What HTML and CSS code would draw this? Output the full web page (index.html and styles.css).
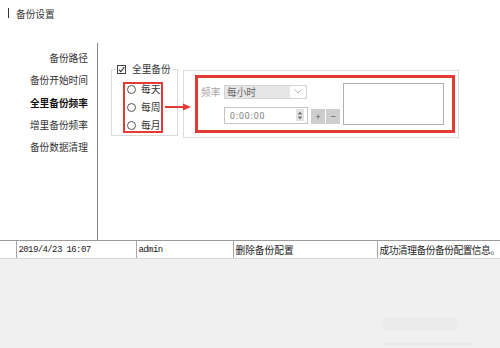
FILE: index.html
```html
<!DOCTYPE html>
<html lang="zh-CN">
<head>
  <meta charset="UTF-8">
  <title>备份设置</title>
  <link rel="stylesheet" href="styles.css">
</head>
<body>
  <div class="page-title"><span class="bar"></span>备份设置</div>

  <div class="settings">
    <ul class="nav">
      <li>备份路径</li>
      <li>备份开始时间</li>
      <li class="active">全里备份频率</li>
      <li>增里备份频率</li>
      <li>备份数据清理</li>
    </ul>

    <div class="panel">
      <fieldset class="group-full">
        <legend>
          <span class="legend-label">
            <span class="check">
              <svg width="7" height="7" viewBox="0 0 7 7"><path d="M0.8 3.6 L2.8 5.6 L6.4 1.2" fill="none" stroke="#333" stroke-width="1.1"/></svg>
            </span>
            全里备份
          </span>
        </legend>
        <div class="radio-list">
          <div class="radio"><span class="dot"></span>每天</div>
          <div class="radio"><span class="dot"></span>每周</div>
          <div class="radio"><span class="dot"></span>每月</div>
        </div>
      </fieldset>

      <svg class="arrow" width="28" height="8" viewBox="0 0 28 8">
        <line x1="0" y1="4" x2="20" y2="4" stroke="#e53935" stroke-width="2"/>
        <polygon points="18,0.5 26,4 18,7.5" fill="#e53935"/>
      </svg>

      <div class="group-freq">
        <div class="freq-box">
          <div class="freq-fields">
            <div class="row">
              <span class="label">频率</span>
              <div class="select">
                <span class="value">每小时</span>
                <span class="caret">
                  <svg width="8" height="5" viewBox="0 0 8 5"><path d="M0.5 0.5 L4 4 L7.5 0.5" fill="none" stroke="#b5b5b5" stroke-width="1"/></svg>
                </span>
              </div>
            </div>
            <div class="row row-time">
              <div class="time">
                <span>0:00:00</span>
                <span class="spin">
                  <svg width="6" height="9" viewBox="0 0 6 9"><polygon points="3,0.5 5.5,3.5 0.5,3.5" fill="#777"/><polygon points="0.5,5.5 5.5,5.5 3,8.5" fill="#777"/></svg>
                </span>
              </div>
              <span class="btn">+</span>
              <span class="btn">−</span>
            </div>
          </div>
          <textarea class="note"></textarea>
        </div>
      </div>
    </div>
  </div>

  <table class="log">
    <colgroup>
      <col style="width:16px">
      <col style="width:120px">
      <col style="width:97px">
      <col style="width:144px">
      <col style="width:123px">
    </colgroup>
    <tr>
      <td></td>
      <td class="mono">2019/4/23 16:07</td>
      <td class="mono">admin</td>
      <td>删除备份配置</td>
      <td class="tight">成功清理备份备份配置信息。</td>
    </tr>
  </table>

  <div class="footer">
    <div class="ghost"></div>
    <div class="ghost-line"></div>
  </div>
</body>
</html>
```

FILE: styles.css
```css
* {
  box-sizing: border-box;
  margin: 0;
  padding: 0;
}

body {
  width: 500px;
  height: 348px;
  overflow: hidden;
  display: flex;
  flex-direction: column;
  background: #fff;
  color: #333;
  font-family: "Noto Sans CJK SC", "Noto Sans", sans-serif;
  font-size: 9.7px;
}

.page-title {
  height: 43px;
  flex-shrink: 0;
  display: flex;
  align-items: flex-start;
  padding: 8px 0 0 8px;
  line-height: 12px;
}

.page-title .bar {
  width: 1px;
  height: 10px;
  margin-right: 7px;
  background: #333;
}

.settings {
  height: 197px;
  flex-shrink: 0;
  display: flex;
}

.nav {
  width: 98px;
  list-style: none;
  border-right: 1px solid #8a8a8a;
  padding: 9px 9px 0 0;
  display: flex;
  flex-direction: column;
  gap: 10.25px;
  text-align: right;
}

.nav li {
  line-height: 12px;
}

.nav .active {
  font-weight: bold;
  color: #111;
}

.panel {
  flex: 1;
  position: relative;
  display: flex;
  align-items: flex-start;
}

/* 全里备份 group */
.group-full {
  width: 67px;
  min-width: 0;
  flex-shrink: 0;
  margin: 20px 0 0 13px;
  border: 1px solid #dcdcdc;
  padding: 7px 14px 2px 11px;
}

.group-full legend {
  margin-left: -7px;
  padding: 0 1px;
  white-space: nowrap;
}

.legend-label {
  display: flex;
  align-items: center;
  gap: 6px;
  line-height: 12px;
}

.check {
  width: 9px;
  height: 9px;
  border: 1px solid #444;
  background: #fff;
  display: flex;
  align-items: center;
  justify-content: center;
}

.radio-list {
  width: 40px;
  border: 2px solid #e53935;
  padding-left: 2px;
  display: flex;
  flex-direction: column;
  gap: 7px;
}

.radio {
  display: flex;
  align-items: center;
  gap: 5px;
  line-height: 11px;
  white-space: nowrap;
}

.radio .dot {
  width: 9px;
  height: 9px;
  border: 1px solid #555;
  border-radius: 50%;
  background: #fff;
}

.arrow {
  position: absolute;
  left: 67px;
  top: 60px;
}

/* 频率 group */
.group-freq {
  width: 276px;
  flex-shrink: 0;
  margin: 27px 0 0 5px;
  border: 1px solid #dcdcdc;
  padding: 4px 3px 4px 11px;
}

.freq-box {
  border: 3px solid #e53935;
  display: flex;
  align-items: center;
  padding: 5px 0 5px 3px;
}

.freq-fields {
  display: flex;
  flex-direction: column;
  gap: 8px;
}

.row {
  display: flex;
  align-items: center;
}

.label {
  width: 23px;
  color: #a8a8a8;
  line-height: 14px;
}

.select {
  width: 83px;
  height: 14px;
  border: 1px solid #d4d4d4;
  display: flex;
}

.select .value {
  flex: 1;
  background: #e6e6e6;
  color: #666;
  padding-left: 2px;
  line-height: 12px;
}

.select .caret {
  width: 16px;
  display: flex;
  align-items: center;
  justify-content: center;
}

.row-time {
  padding-left: 23px;
  align-items: flex-end;
}

.time {
  width: 84px;
  height: 17px;
  border: 1px solid #c4c4c4;
  display: flex;
  align-items: center;
  padding-left: 5px;
  color: #777;
  font-family: "Noto Sans", sans-serif;
  font-size: 8.5px;
  letter-spacing: 0.9px;
}

.time .spin {
  margin-left: auto;
  margin-right: 3px;
  width: 8px;
  height: 12px;
  background: #e4e4e4;
  display: flex;
  align-items: center;
  justify-content: center;
}

.btn {
  width: 14px;
  height: 15px;
  margin-left: 1px;
  background: #cdcdcd;
  color: #555;
  font-family: "Noto Sans", sans-serif;
  font-size: 9px;
  line-height: 15px;
  text-align: center;
}

.time + .btn {
  margin-left: 3px;
}

.note {
  width: 101px;
  height: 42px;
  margin-left: 3px;
  border: 1px solid #b0b0b0;
  background: #fff;
  resize: none;
}

/* log row */
.log {
  width: 500px;
  flex-shrink: 0;
  border-collapse: collapse;
  table-layout: fixed;
  background: #fff;
}

.log td {
  height: 18px;
  padding: 0 0 0 2px;
  border-top: 1px solid #9a9a9a;
  border-bottom: 1px solid #d8d8d8;
  white-space: nowrap;
  line-height: 16px;
  color: #222;
}

.log td + td {
  border-left: 1px solid #a8a8a8;
}

.log .mono {
  font-family: "Liberation Mono", monospace;
  font-size: 9px;
  letter-spacing: -0.6px;
}

.log .tight {
  letter-spacing: -0.45px;
}

.footer {
  flex: 1;
  background: #f0f0f0;
  padding: 58px 0 0 382px;
  display: flex;
  flex-direction: column;
  gap: 12px;
}

.ghost {
  width: 76px;
  height: 14px;
  background: #ebebeb;
  border-radius: 4px;
}

.ghost-line {
  width: 90px;
  height: 2px;
  background: #eaeaea;
}
```
